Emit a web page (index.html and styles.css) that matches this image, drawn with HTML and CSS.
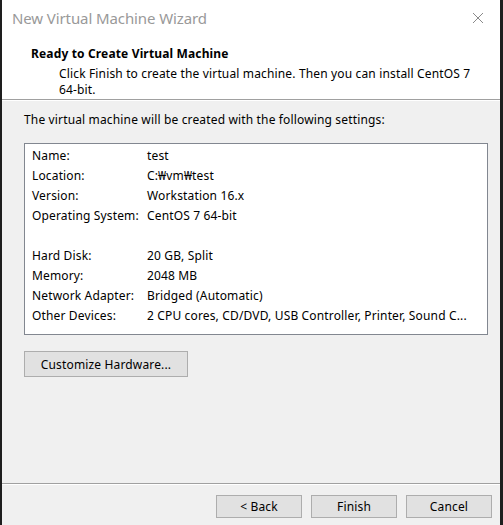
FILE: index.html
```html
<!DOCTYPE html>
<html>
<head>
  <title>New Virtual Machine Wizard</title>
  <link rel="stylesheet" href="styles.css">
</head>
<body>

  <div class="window">
    <div class="titlebar">
      <span class="title">New Virtual Machine Wizard</span>
      <svg class="close" width="12" height="12" viewBox="0 0 12 12">
        <path d="M1 1 L11 11 M11 1 L1 11" stroke="#8a8a8a" stroke-width="1" fill="none"/>
      </svg>
    </div>

    <div class="header">
      <h1>Ready to Create Virtual Machine</h1>
      <p>Click Finish to create the virtual machine. Then you can install CentOS 7 64-bit.</p>
    </div>

    <div class="content">
      <p class="intro">The virtual machine will be created with the following settings:</p>

      <div class="summary">
        <div class="row"><span class="label">Name:</span><span>test</span></div>
        <div class="row"><span class="label">Location:</span><span>C:₩vm₩test</span></div>
        <div class="row"><span class="label">Version:</span><span>Workstation 16.x</span></div>
        <div class="row"><span class="label">Operating System:</span><span>CentOS 7 64-bit</span></div>
        <div class="row"></div>
        <div class="row"><span class="label">Hard Disk:</span><span>20 GB, Split</span></div>
        <div class="row"><span class="label">Memory:</span><span>2048 MB</span></div>
        <div class="row"><span class="label">Network Adapter:</span><span>Bridged (Automatic)</span></div>
        <div class="row"><span class="label">Other Devices:</span><span>2 CPU cores, CD/DVD, USB Controller, Printer, Sound C...</span></div>
      </div>

      <button class="btn btn-customize">Customize Hardware...</button>
    </div>

    <div class="footer">
      <button class="btn">&lt; Back</button>
      <button class="btn">Finish</button>
      <button class="btn">Cancel</button>
    </div>
  </div>

</body>
</html>
```

FILE: styles.css
```css
body {
  margin: 0;
  padding: 0;
  background-color: #1e1e1e;
  font-family: "Noto Sans", "Noto Sans CJK KR", sans-serif;
  font-size: 12px;
  letter-spacing: 0.15px;
  color: #000;
}
.window {
  margin-left: 2px;
  width: 498px;
  height: 525px;
  display: flex;
  flex-direction: column;
  background-color: #f0f0f0;
}
.titlebar {
  height: 36px;
  background-color: #fff;
  display: flex;
  align-items: center;
  justify-content: space-between;
  padding: 0 16px 0 10px;
}
.title {
  font-size: 15px;
  color: #999;
  letter-spacing: -0.1px;
}
.close {
  margin-top: -1px;
}
.header {
  background-color: #fff;
  padding: 10px 10px 2px 29px;
  border-bottom: 1px solid #a0a0a0;
  height: 51px;
}
.header h1 {
  margin: 0 0 4px 0;
  font-size: 12px;
  font-weight: bold;
  line-height: 16px;
}
.header p {
  margin: 0 0 0 28px;
  line-height: 16px;
  width: 430px;
}
.content {
  flex: 1;
  padding: 11px 12px 0 22px;
  border-top: 1px solid #fff;
  border-bottom: 1px solid #a0a0a0;
}
.intro {
  margin: 0 0 15px 0;
  line-height: 16px;
}
.summary {
  background-color: #fff;
  border: 1px solid #828790;
  padding: 2px 0 8px 7px;
}
.row {
  display: flex;
  height: 20px;
  line-height: 20px;
  white-space: nowrap;
}
.label {
  width: 115px;
}
.btn {
  font-family: inherit;
  font-size: 12px;
  letter-spacing: inherit;
  background-color: #e1e1e1;
  border: 1px solid #adadad;
  padding: 0;
  color: #000;
}
.btn-customize {
  margin-top: 16px;
  width: 164px;
  height: 26px;
}
.footer {
  border-top: 1px solid #fff;
  height: 30px;
  display: flex;
  justify-content: flex-end;
  align-items: flex-start;
  gap: 9px;
  padding: 10px 8px 0 0;
}
.footer .btn {
  width: 86px;
  height: 23px;
}
```
